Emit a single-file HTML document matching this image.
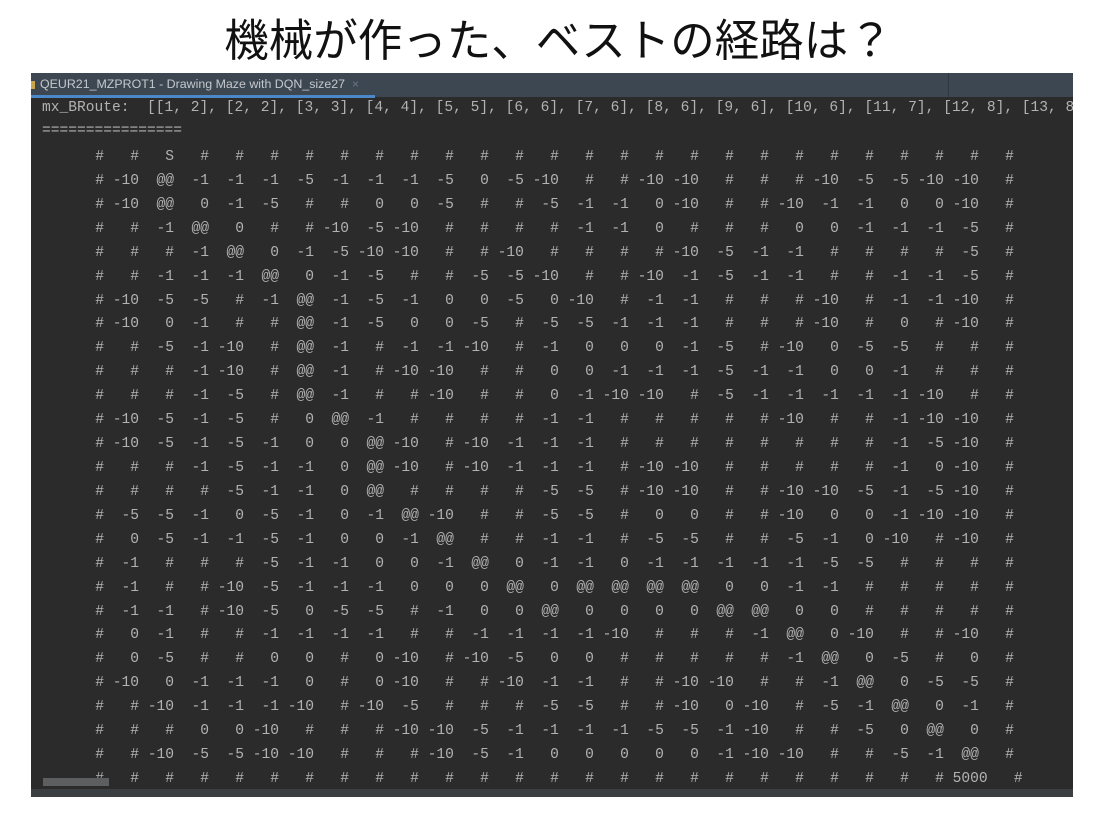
<!DOCTYPE html>
<html><head><meta charset="utf-8"><style>
html,body{margin:0;padding:0;background:#fff;width:1117px;height:819px;overflow:hidden;position:relative}
.title{position:absolute;left:0;width:1117px;top:14px;text-align:center;font-family:"Liberation Sans","Noto Sans CJK JP",sans-serif;font-size:44.5px;line-height:56px;color:#111}
.panel{position:absolute;left:31px;top:73px;width:1042px;height:724px;background:#2b2b2b;overflow:hidden}
.tabbar{position:absolute;left:0;top:0;width:1042px;height:24px;background:#3d4752}
.tabline{position:absolute;left:0;top:22px;width:344px;height:3px;background:#4a88c7}
.tabdiv{position:absolute;left:917px;top:0;width:1px;height:24px;background:#2f3741}
.tabtxt{position:absolute;left:9px;top:4px;font-family:"Liberation Sans",sans-serif;font-size:12.4px;color:#c4c8cc;white-space:pre}
.dot{position:absolute;left:0;top:8px;width:4px;height:8px;background:#c9a64a}
pre{margin:0;position:absolute;font-family:"Liberation Mono",monospace;font-size:14.58px;line-height:23px;color:#b2b2b2;white-space:pre}
.scroll{position:absolute;left:12px;top:705px;width:66px;height:8px;background:#5c5e60}
.bottom{position:absolute;left:0;top:716px;width:1042px;height:8px;background:#3c3f41}
</style></head><body>
<div class="title">機械が作った、ベストの経路は？</div>
<div class="panel">
<div class="tabbar"><div class="dot"></div><div class="tabtxt">QEUR21_MZPROT1 - Drawing Maze with DQN_size27  <span style="color:#6b7480">×</span></div><div class="tabline"></div><div class="tabdiv"></div></div>
<pre style="left:11px;top:23.5px">mx_BRoute:  [[1, 2], [2, 2], [3, 3], [4, 4], [5, 5], [6, 6], [7, 6], [8, 6], [9, 6], [10, 6], [11, 7], [12, 8], [13, 8
================</pre>
<pre style="left:38px;top:73px;line-height:23.92px">   #   #   S   #   #   #   #   #   #   #   #   #   #   #   #   #   #   #   #   #   #   #   #   #   #   #   #
   # -10  @@  -1  -1  -1  -5  -1  -1  -1  -5   0  -5 -10   #   # -10 -10   #   #   # -10  -5  -5 -10 -10   #
   # -10  @@   0  -1  -5   #   #   0   0  -5   #   #  -5  -1  -1   0 -10   #   # -10  -1  -1   0   0 -10   #
   #   #  -1  @@   0   #   # -10  -5 -10   #   #   #   #  -1  -1   0   #   #   #   0   0  -1  -1  -1  -5   #
   #   #   #  -1  @@   0  -1  -5 -10 -10   #   # -10   #   #   #   # -10  -5  -1  -1   #   #   #   #  -5   #
   #   #  -1  -1  -1  @@   0  -1  -5   #   #  -5  -5 -10   #   # -10  -1  -5  -1  -1   #   #  -1  -1  -5   #
   # -10  -5  -5   #  -1  @@  -1  -5  -1   0   0  -5   0 -10   #  -1  -1   #   #   # -10   #  -1  -1 -10   #
   # -10   0  -1   #   #  @@  -1  -5   0   0  -5   #  -5  -5  -1  -1  -1   #   #   # -10   #   0   # -10   #
   #   #  -5  -1 -10   #  @@  -1   #  -1  -1 -10   #  -1   0   0   0  -1  -5   # -10   0  -5  -5   #   #   #
   #   #   #  -1 -10   #  @@  -1   # -10 -10   #   #   0   0  -1  -1  -1  -5  -1  -1   0   0  -1   #   #   #
   #   #   #  -1  -5   #  @@  -1   #   # -10   #   #   0  -1 -10 -10   #  -5  -1  -1  -1  -1  -1 -10   #   #
   # -10  -5  -1  -5   #   0  @@  -1   #   #   #   #  -1  -1   #   #   #   #   # -10   #   #  -1 -10 -10   #
   # -10  -5  -1  -5  -1   0   0  @@ -10   # -10  -1  -1  -1   #   #   #   #   #   #   #   #  -1  -5 -10   #
   #   #   #  -1  -5  -1  -1   0  @@ -10   # -10  -1  -1  -1   # -10 -10   #   #   #   #   #  -1   0 -10   #
   #   #   #   #  -5  -1  -1   0  @@   #   #   #   #  -5  -5   # -10 -10   #   # -10 -10  -5  -1  -5 -10   #
   #  -5  -5  -1   0  -5  -1   0  -1  @@ -10   #   #  -5  -5   #   0   0   #   # -10   0   0  -1 -10 -10   #
   #   0  -5  -1  -1  -5  -1   0   0  -1  @@   #   #  -1  -1   #  -5  -5   #   #  -5  -1   0 -10   # -10   #
   #  -1   #   #   #  -5  -1  -1   0   0  -1  @@   0  -1  -1   0  -1  -1  -1  -1  -1  -5  -5   #   #   #   #
   #  -1   #   # -10  -5  -1  -1  -1   0   0   0  @@   0  @@  @@  @@  @@   0   0  -1  -1   #   #   #   #   #
   #  -1  -1   # -10  -5   0  -5  -5   #  -1   0   0  @@   0   0   0   0  @@  @@   0   0   #   #   #   #   #
   #   0  -1   #   #  -1  -1  -1  -1   #   #  -1  -1  -1  -1 -10   #   #   #  -1  @@   0 -10   #   # -10   #
   #   0  -5   #   #   0   0   #   0 -10   # -10  -5   0   0   #   #   #   #   #  -1  @@   0  -5   #   0   #
   # -10   0  -1  -1  -1   0   #   0 -10   #   # -10  -1  -1   #   # -10 -10   #   #  -1  @@   0  -5  -5   #
   #   # -10  -1  -1  -1 -10   # -10  -5   #   #   #  -5  -5   #   # -10   0 -10   #  -5  -1  @@   0  -1   #
   #   #   #   0   0 -10   #   #   # -10 -10  -5  -1  -1  -1  -1  -5  -5  -1 -10   #   #  -5   0  @@   0   #
   #   # -10  -5  -5 -10 -10   #   #   # -10  -5  -1   0   0   0   0   0  -1 -10 -10   #   #  -5  -1  @@   #
   #   #   #   #   #   #   #   #   #   #   #   #   #   #   #   #   #   #   #   #   #   #   #   #   # 5000   #</pre>
<div class="scroll"></div>
<div class="bottom"></div>
</div>
</body></html>
